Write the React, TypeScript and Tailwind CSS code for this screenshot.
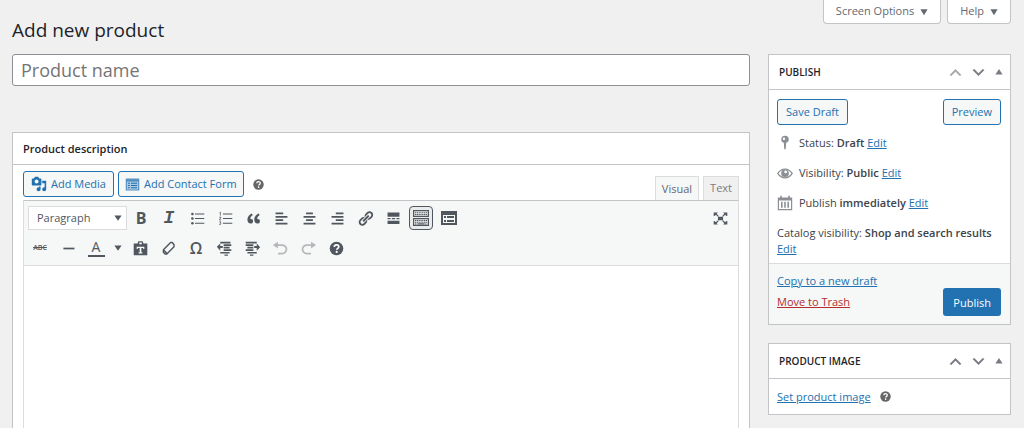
import type { FC, ReactNode } from "react";

const Icon: FC<{ children: ReactNode; className?: string }> = ({
  children,
  className = "size-[17px]",
}) => (
  <svg
    viewBox="0 0 20 20"
    fill="currentColor"
    aria-hidden="true"
    className={`shrink-0 ${className}`}
  >
    {children}
  </svg>
);

const HelpIcon: FC<{ className?: string }> = ({ className }) => (
  <Icon className={className}>
    <circle cx="10" cy="10" r="8" />
    <path
      d="M7.4 8.2c0-3.4 5.3-3.3 5.3-.3 0 2-2.4 1.9-2.4 3.7"
      fill="none"
      stroke="#fff"
      strokeWidth="2"
    />
    <circle cx="10.2" cy="14" r="1.3" fill="#fff" />
  </Icon>
);

const ToolButton: FC<{
  label: string;
  active?: boolean;
  disabled?: boolean;
  children: ReactNode;
}> = ({ label, active, disabled, children }) => (
  <button
    type="button"
    aria-label={label}
    aria-pressed={active}
    disabled={disabled}
    className={`flex h-6 w-7 items-center justify-center ${
      disabled ? "text-[#b5b8bb]" : "text-[#50575e]"
    }`}
  >
    {active ? (
      <span className="flex size-6 items-center justify-center rounded-sm border border-[#50575e] bg-[#ebebeb]">
        {children}
      </span>
    ) : (
      children
    )}
  </button>
);

const firstRow: { label: string; active?: boolean; icon: ReactNode }[] = [
  { label: "Bold", icon: <span className="text-base font-bold">B</span> },
  {
    label: "Italic",
    icon: (
      <span className="font-['Liberation_Mono',monospace] text-lg font-bold italic">
        I
      </span>
    ),
  },
  {
    label: "Bulleted list",
    icon: (
      <Icon>
        <path d="M7 4h11v1.2H7zM7 9.5h11v1.2H7zM7 15h11v1.2H7z" />
        <circle cx="4" cy="4.6" r="1.5" />
        <circle cx="4" cy="10.1" r="1.5" />
        <circle cx="4" cy="15.6" r="1.5" />
      </Icon>
    ),
  },
  {
    label: "Numbered list",
    icon: (
      <Icon>
        <path d="M7 4h11v1.2H7zM7 9.5h11v1.2H7zM7 15h11v1.2H7z" />
        <path
          d="M3 3.2l1-.7v4M2.7 8.5h2l-1.8 3.2h2M2.7 14h2l-1 1.5c1.6 0 1.2 2.2-1 1.7"
          fill="none"
          stroke="currentColor"
          strokeWidth=".9"
        />
      </Icon>
    ),
  },
  {
    label: "Blockquote",
    icon: (
      <Icon>
        <path d="M9.49 13.22c0-.74-.2-1.38-.61-1.9-.62-.78-1.83-.88-2.53-.72-.29-1.65 1.11-3.75 2.92-4.65L7.88 4c-2.73 1.3-5.42 4.28-4.96 8.05C3.21 14.43 4.59 16 6.54 16c.85 0 1.56-.25 2.12-.75s.83-1.18.83-2.03zm8.05 0c0-.74-.2-1.38-.61-1.9-.63-.78-1.83-.88-2.53-.72-.29-1.65 1.11-3.75 2.92-4.65L15.93 4c-2.73 1.3-5.41 4.28-4.95 8.05.29 2.38 1.66 3.95 3.61 3.95.85 0 1.56-.25 2.12-.75s.83-1.18.83-2.03z" />
      </Icon>
    ),
  },
  {
    label: "Align left",
    icon: (
      <Icon>
        <path d="M12 5V3H3v2h9zm5 4V7H3v2h14zm-5 4v-2H3v2h9zm5 4v-2H3v2h14z" />
      </Icon>
    ),
  },
  {
    label: "Align center",
    icon: (
      <Icon>
        <path d="M14 5V3H6v2h8zm3 4V7H3v2h14zm-3 4v-2H6v2h8zm3 4v-2H3v2h14z" />
      </Icon>
    ),
  },
  {
    label: "Align right",
    icon: (
      <Icon>
        <path d="M17 5V3H8v2h9zm0 4V7H3v2h14zm0 4v-2H8v2h9zm0 4v-2H3v2h14z" />
      </Icon>
    ),
  },
  {
    label: "Insert link",
    icon: (
      <Icon>
        <path d="M17.74 2.76c1.68 1.69 1.68 4.41 0 6.1l-1.53 1.52c-1.12 1.12-2.7 1.47-4.14 1.09l2.62-2.61.76-.77.76-.76c.84-.84.84-2.2 0-3.04-.84-.85-2.2-.85-3.04 0l-.77.76-3.38 3.38c-.37-1.44-.02-3.02 1.1-4.14l1.52-1.53c1.69-1.68 4.42-1.68 6.1 0zM8.59 13.43l5.34-5.34c.42-.42.42-1.1 0-1.52-.44-.43-1.13-.39-1.53 0l-5.33 5.34c-.42.42-.42 1.1 0 1.52.44.43 1.13.39 1.52 0zm-.76 2.29l4.14-4.15c.38 1.44.03 3.02-1.09 4.14l-1.52 1.53c-1.69 1.68-4.41 1.68-6.1 0-1.68-1.68-1.68-4.42 0-6.1l1.53-1.52c1.12-1.12 2.7-1.47 4.14-1.1l-4.14 4.15c-.85.84-.85 2.2 0 3.05.84.84 2.2.84 3.04 0z" />
      </Icon>
    ),
  },
  {
    label: "Read more",
    icon: (
      <Icon>
        <path d="M3 3h14v5H3zM3 9.5h3.5V11H3zM8 9.5h4V11H8zM13.5 9.5H17V11h-3.5zM3 12.5h14v4H3z" />
      </Icon>
    ),
  },
  {
    label: "Toolbar toggle",
    active: true,
    icon: (
      <Icon className="size-5">
        <path
          fillRule="evenodd"
          d="M2 2h16v7H2zM3.2 3.2v4.6h13.6V3.2zM2 10h16v8H2zM3.2 11.2v5.6h13.6v-5.6z"
        />
        <path
          d="M4 4.7h12M4 6.5h12M4 12.5h12M4 14.2h12M4 16h2M14 16h2"
          fill="none"
          stroke="currentColor"
          strokeWidth="1.1"
          strokeDasharray="1.2 .6"
        />
        <path d="M6.5 15.3h7v1.2h-7z" />
      </Icon>
    ),
  },
  {
    label: "Add contact form",
    icon: (
      <Icon className="size-5">
        <path
          fillRule="evenodd"
          d="M2 3h16v14H2zM4 7v8h12V7z"
        />
        <path d="M5 8h2v2H5zM5 12h2v2H5zM8 8h7v2H8zM8 12h7v2H8z" />
      </Icon>
    ),
  },
];

const secondRow: { label: string; disabled?: boolean; icon: ReactNode }[] = [
  {
    label: "Paste as text",
    icon: (
      <Icon>
        <path
          fillRule="evenodd"
          d="M2 4h4.5l1-2.5h5l1 2.500H18v14H2zM8.5 3v2h3V3zM5.5 8v2.500h1.300v-1h2.200v5H7.800V16h4.400v-1.500H11v-5h2.200v1h1.300V8z"
        />
      </Icon>
    ),
  },
  {
    label: "Clear formatting",
    icon: (
      <Icon>
        <path
          d="M12.5 3L4 11.5v3l2 2h2L16.500 8V5.500L14.500 3zM4 11.500l4 4"
          fill="none"
          stroke="currentColor"
          strokeWidth="1.7"
          strokeLinejoin="round"
        />
      </Icon>
    ),
  },
  {
    label: "Special character",
    icon: <span className="text-base font-semibold">Ω</span>,
  },
  {
    label: "Decrease indent",
    icon: (
      <Icon>
        <path d="M5 2h12v2H5zM9 5h9v2H9zM9 8h7v2H9zM9 11h9v2H9zM5 14h11v2H5zM10 17h4v1.5h-4zM1 8l4-4v3h3v2.500H5v3z" />
      </Icon>
    ),
  },
  {
    label: "Increase indent",
    icon: (
      <Icon>
        <path d="M2 2h13v2H2zM2 5h9v2H2zM4 8h7v2H4zM2 11h9v2H2zM4 14h11v2H4zM7 17h4v1.5H7zM19 8.500l-4 4v-3h-3V7h3V4z" />
      </Icon>
    ),
  },
  {
    label: "Undo",
    disabled: true,
    icon: (
      <Icon>
        <path d="M12 5H7V2L1 6l6 4V7h5c2.2 0 4 1.8 4 4s-1.8 4-4 4H7v2h5c3.3 0 6-2.7 6-6s-2.7-6-6-6z" />
      </Icon>
    ),
  },
  {
    label: "Redo",
    disabled: true,
    icon: (
      <Icon>
        <path d="M8 5h5V2l6 4-6 4V7H8c-2.2 0-4 1.8-4 4s1.8 4 4 4h5v2H8c-3.3 0-6-2.7-6-6s2.7-6 6-6z" />
      </Icon>
    ),
  },
  { label: "Keyboard shortcuts", icon: <HelpIcon /> },
];

const EditLink: FC<{ label: string }> = ({ label }) => (
  <a href="#edit" aria-label={label} className="text-[#2271b1] underline">
    Edit
  </a>
);

const SideBox: FC<{
  title: string;
  first?: boolean;
  children: ReactNode;
}> = ({ title, first, children }) => (
  <section className="border border-[#c3c4c7] bg-white">
    <header className="flex h-[35px] items-center border-b border-[#c3c4c7] pr-[5px] pl-[10px]">
      <h2 className="flex-1 text-[10px] font-semibold text-[#1d2327] uppercase">
        {title}
      </h2>
      <div className="flex items-center gap-[6px] text-[#787c82]">
        <button
          type="button"
          aria-label={`Move ${title} up`}
          disabled={first}
          className="disabled:text-[#a7aaad]"
        >
          <Icon>
            <path d="M15 14l-5-5-5 5-2-1 7-7 7 7z" />
          </Icon>
        </button>
        <button type="button" aria-label={`Move ${title} down`}>
          <Icon>
            <path d="M5 6l5 5 5-5 2 1-7 7-7-7z" />
          </Icon>
        </button>
        <button type="button" aria-label={`Toggle ${title}`}>
          <Icon className="size-3">
            <path d="M10 5l6 9H4z" />
          </Icon>
        </button>
      </div>
    </header>
    {children}
  </section>
);

const outlineButton =
  "flex h-[26px] items-center rounded-[3px] border border-[#2271b1] bg-[#f6f7f7] text-[11px] text-[#2271b1]";

const ScreenTab: FC<{ children: ReactNode }> = ({ children }) => (
  <button
    type="button"
    className="flex h-6 items-center gap-[6px] rounded-b border border-t-0 border-[#c3c4c7] bg-white px-3 text-[11px] text-[#646970]"
  >
    {children}
    <Icon className="size-2">
      <path d="M1 3h18l-9 15z" />
    </Icon>
  </button>
);

const Editor: FC = () => (
  <section className="flex flex-1 flex-col border border-b-0 border-[#c3c4c7] bg-white">
    <h2 className="border-b border-[#c3c4c7] px-[10px] py-2 text-[11px] leading-[15px] font-semibold text-[#1d2327]">
      Product description
    </h2>
    <div className="flex flex-1 flex-col px-[10px] pt-[6px]">
      <div className="flex items-start justify-between">
        <div className="flex items-center gap-1">
          <button type="button" className={`${outlineButton} gap-1 px-[7px]`}>
            <Icon className="size-4">
              <path d="M13 11V4c0-.55-.45-1-1-1h-1.67L9 1H5L3.67 3H2c-.55 0-1 .45-1 1v7c0 .55.45 1 1 1h10c.55 0 1-.45 1-1zM7 4.5c1.38 0 2.5 1.12 2.5 2.5S8.38 9.5 7 9.5 4.5 8.38 4.5 7 5.62 4.5 7 4.5zM14 6h5v10.5c0 1.38-1.12 2.5-2.5 2.5S14 17.88 14 16.5s1.12-2.5 2.5-2.5c.17 0 .34.02.5.05V9h-3V6zm-4 8.05V13h2v3.5c0 1.38-1.12 2.5-2.5 2.5S7 17.88 7 16.5 8.12 14 9.5 14c.17 0 .34.02.5.05z" />
            </Icon>
            Add Media
          </button>
          <button type="button" className={`${outlineButton} gap-1 px-[6px]`}>
            <Icon className="size-[15px]">
              <path
                fillRule="evenodd"
                d="M1 2h18v16H1zM2.5 6v10.500h15V6z"
                opacity=".75"
              />
              <path opacity=".35" d="M2 5h16v12H2z" />
              <path d="M4 7.5h2.500V9H4zM4 10.500h2.500V12H4zM4 13.500h2.500V15H4zM8 7.500h8V9H8zM8 10.500h8V12H8zM8 13.500h8V15H8z" />
            </Icon>
            Add Contact Form
          </button>
          <button
            type="button"
            aria-label="Description help"
            className="ml-1 text-[#666]"
          >
            <HelpIcon className="size-[13px]" />
          </button>
        </div>
        <div className="flex gap-1 pt-[5px] text-[11px] text-[#646970]">
          <button
            type="button"
            className="-mb-px h-[25px] border border-b-0 border-[#dcdcde] bg-[#f6f7f7] px-[6px]"
          >
            Visual
          </button>
          <button
            type="button"
            className="h-6 border border-b-0 border-[#dcdcde] bg-[#f0f0f1] px-[6px] text-[#787c82]"
          >
            Text
          </button>
        </div>
      </div>
      <div className="flex flex-1 flex-col border border-b-0 border-[#dcdcde] border-t-[#c3c4c7]">
        <div className="flex flex-col gap-[6px] border-b border-[#dcdcde] bg-[#f6f7f7] px-1 py-[5px]">
          <div className="flex h-6 items-center">
            <div className="relative">
              <select
                aria-label="Paragraph style"
                className="block h-6 w-[99px] appearance-none border border-[#dcdcde] bg-white pl-2 text-[11px] text-[#50575e]"
              >
                <option>Paragraph</option>
              </select>
              <Icon className="pointer-events-none absolute top-2 right-[5px] size-2 text-[#50575e]">
                <path d="M1 4h18l-9 13z" />
              </Icon>
            </div>
            <div className="flex">
              {firstRow.map(({ label, active, icon }) => (
                <ToolButton key={label} label={label} active={active}>
                  {icon}
                </ToolButton>
              ))}
            </div>
            <div className="ml-auto">
              <ToolButton label="Fullscreen">
                <Icon>
                  <path d="M7 8h6v4H7zM2 3h5L5.5 4.500 8 7 7 8 4.500 5.500 3 7H2zM18 3v4h-1l-1.500-1.500L13 8l-1-1 2.500-2.500L13 3zM2 17v-4h1l1.500 1.500L7 12l1 1-2.500 2.500L7 17zM18 17h-5l1.500-1.500L12 13l1-1 2.500 2.500L17 13h1z" />
                </Icon>
              </ToolButton>
            </div>
          </div>
          <div className="-ml-[2px] flex h-6 items-center">
            <ToolButton label="Strikethrough">
              <span className="text-[7px] font-semibold line-through">ABC</span>
            </ToolButton>
            <ToolButton label="Horizontal line">
              <Icon>
                <path d="M4 9h13v2H4z" />
              </Icon>
            </ToolButton>
            <ToolButton label="Text color">
              <span className="w-[17px] border-b-2 border-[#50575e] text-sm leading-4">
                A
              </span>
            </ToolButton>
            <button
              type="button"
              aria-label="Choose text color"
              className="flex h-6 w-4 items-center justify-center text-[#50575e]"
            >
              <Icon className="size-2">
                <path d="M1 4h18l-9 13z" />
              </Icon>
            </button>
            {secondRow.map(({ label, disabled, icon }) => (
              <ToolButton key={label} label={label} disabled={disabled}>
                {icon}
              </ToolButton>
            ))}
          </div>
        </div>
        <textarea
          aria-label="Product description"
          className="min-h-40 w-full flex-1 resize-none bg-white p-2 text-sm outline-none"
        />
      </div>
    </div>
  </section>
);

const PublishBox: FC = () => (
  <SideBox title="Publish" first>
    <div className="pt-[9px] pr-[9px] pb-[6px] pl-2 text-[11px] leading-4">
      <div className="flex justify-between">
        <button type="button" className={`${outlineButton} px-2`}>
          Save Draft
        </button>
        <button type="button" className={`${outlineButton} px-2`}>
          Preview
        </button>
      </div>
      <ul className="mt-[10px] flex flex-col gap-[14px]">
        <li className="flex items-center gap-[6px]">
          <Icon className="size-4 text-[#8c8f94]">
            <path
              fillRule="evenodd"
              d="M10 1a4.5 4.5 0 0 1 1.5 8.800L11 17l-1 1.500L9 17l-.5-7.200A4.500 4.500 0 0 1 10 1zM8.700 3.200a1.500 1.500 0 1 0 0 3 1.500 1.500 0 0 0 0-3z"
            />
          </Icon>
          <span>
            Status: <b className="font-semibold">Draft</b>{" "}
            <EditLink label="Edit status" />
          </span>
        </li>
        <li className="flex items-center gap-[6px]">
          <Icon className="size-4 text-[#8c8f94]">
            <path
              d="M1 10.5C5.5 3.2 14.5 3.2 19 10.5 14.5 17.8 5.5 17.8 1 10.5z"
              fill="none"
              stroke="currentColor"
              strokeWidth="1.6"
            />
            <path
              fillRule="evenodd"
              d="M10 5.5a4.8 4.8 0 1 1 0 9.600 4.800 4.800 0 0 1 0-9.600zM10.800 7a1.700 1.700 0 1 0 0 3.400 1.700 1.700 0 0 0 0-3.400z"
            />
          </Icon>
          <span>
            Visibility: <b className="font-semibold">Public</b>{" "}
            <EditLink label="Edit visibility" />
          </span>
        </li>
        <li className="flex items-center gap-[6px]">
          <Icon className="size-4 text-[#8c8f94]">
            <path
              fillRule="evenodd"
              d="M1 3h3V1h2v2h8V1h2v2h3v16H1zM2.5 7v10.500h15V7zM5 8.500h2V16H5zM9 8.500h2V16H9zM13 8.500h2V16h-2z"
            />
          </Icon>
          <span>
            Publish <b className="font-semibold">immediately</b>{" "}
            <EditLink label="Edit publish date" />
          </span>
        </li>
        <li>
          Catalog visibility:{" "}
          <b className="font-semibold">Shop and search results</b>{" "}
          <EditLink label="Edit catalog visibility" />
        </li>
      </ul>
    </div>
    <footer className="flex items-end justify-between border-t border-[#dcdcde] bg-[#f6f7f7] pt-[6px] pr-[9px] pb-2 pl-2 text-[11px] leading-[21px]">
      <div className="flex flex-col items-start pb-1">
        <a href="#copy" className="text-[#2271b1] underline">
          Copy to a new draft
        </a>
        <a href="#trash" className="text-[#b32d2e] underline">
          Move to Trash
        </a>
      </div>
      <button
        type="button"
        className="h-7 rounded-[3px] bg-[#2271b1] px-[10px] text-[11px] text-white"
      >
        Publish
      </button>
    </footer>
  </SideBox>
);

export default function App() {
  return (
    <div className="flex min-h-screen flex-col bg-[#f0f0f1] pr-[13px] pl-3 font-['Open_Sans','Noto_Sans',sans-serif] text-[#3c434a]">
      <div className="flex items-start justify-between">
        <h1 className="pt-4 text-[19px] leading-7 text-[#1d2327]">
          Add new product
        </h1>
        <div className="flex gap-[6px]">
          <ScreenTab>Screen Options</ScreenTab>
          <ScreenTab>Help</ScreenTab>
        </div>
      </div>
      <div className="flex flex-1 gap-[18px] pt-[10px]">
        <main className="flex min-w-0 flex-1 flex-col gap-[46px]">
          <input
            type="text"
            aria-label="Product name"
            placeholder="Product name"
            className="h-8 w-full rounded-[3px] border border-[#8c8f94] bg-white px-2 text-lg placeholder:text-[#757575]"
          />
          <Editor />
        </main>
        <aside className="flex w-[243px] shrink-0 flex-col gap-[18px]">
          <PublishBox />
          <SideBox title="Product image">
            <div className="flex items-center gap-2 px-2 py-2 text-[11px] leading-[19px]">
              <a href="#image" className="text-[#2271b1] underline">
                Set product image
              </a>
              <button
                type="button"
                aria-label="Product image help"
                className="text-[#666]"
              >
                <HelpIcon className="size-[13px]" />
              </button>
            </div>
          </SideBox>
        </aside>
      </div>
    </div>
  );
}
